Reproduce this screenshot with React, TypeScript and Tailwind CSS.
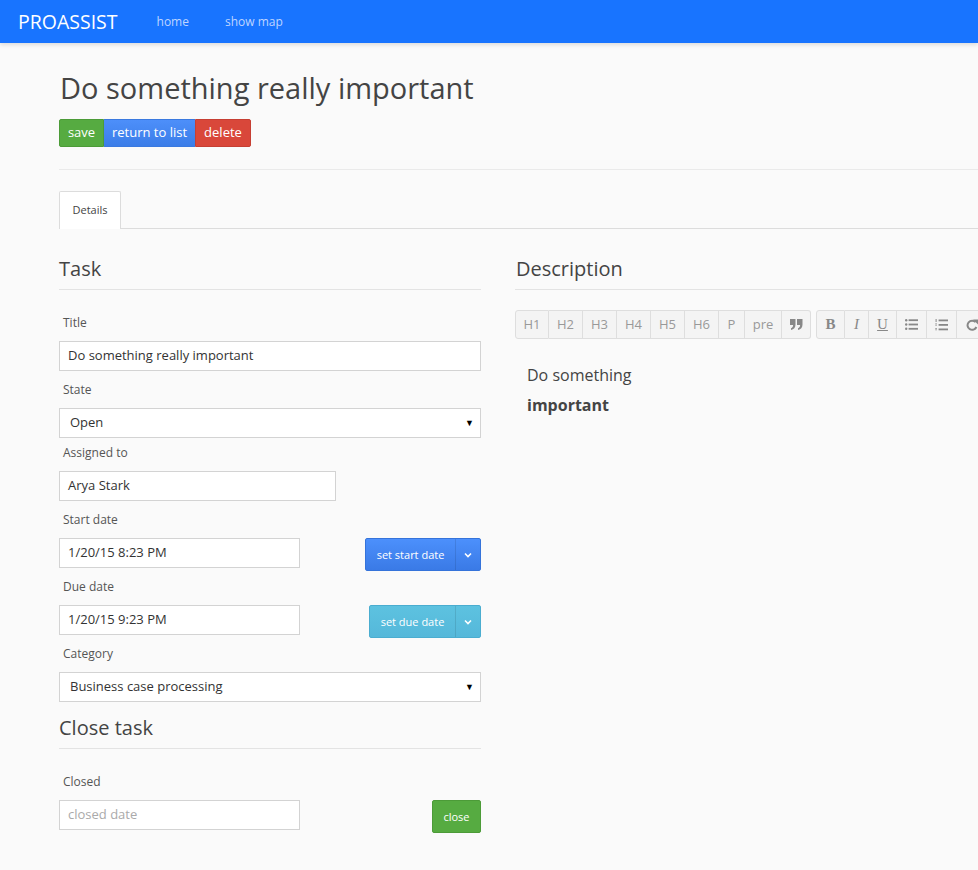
import React from "react";

const font = "font-['Open_Sans','Liberation_Sans',sans-serif]";

function Label({ children, className = "" }: { children: React.ReactNode; className?: string }) {
  return (
    <div className={`h-[17px] text-[12px] leading-[17px] text-[#555] pl-[4px] mb-[10px] ${className}`}>
      {children}
    </div>
  );
}

function TextInput({ value, placeholder, width }: { value?: string; placeholder?: string; width: string }) {
  return (
    <div
      className={`${width} h-[30px] bg-white border border-[#d3d3d3] flex items-center px-[8px] text-[13px] ${
        value ? "text-[#333]" : "text-[#aaa]"
      }`}
    >
      {value ?? placeholder}
    </div>
  );
}

function Select({ value }: { value: string }) {
  return (
    <div className="w-full h-[30px] bg-white border border-[#d3d3d3] flex items-center justify-between pl-[10px] pr-[6px] text-[13px] text-[#333]">
      <span>{value}</span>
      <span className="text-[9px] text-black">▼</span>
    </div>
  );
}

function Chevron() {
  return (
    <svg width="8" height="6" viewBox="0 0 8 6">
      <path d="M1 1.5 L4 4.5 L7 1.5" stroke="white" strokeWidth="1.6" fill="none" />
    </svg>
  );
}

function SplitButton({ label, mainW, tone }: { label: string; mainW: string; tone: "blue" | "cyan" }) {
  const bg =
    tone === "blue"
      ? "bg-gradient-to-b from-[#4c90fc] to-[#3a7ae6] border-[#3573da]"
      : "bg-gradient-to-b from-[#5dc2e0] to-[#55b8da] border-[#4aadd0]";
  return (
    <div className={`flex h-[33px] rounded-[2px] border ${bg} text-white text-[11px]`}>
      <div className={`${mainW} flex items-center justify-center pt-[2px]`}>{label}</div>
      <div className="w-[25px] flex items-center justify-center border-l border-black/10">
        <Chevron />
      </div>
    </div>
  );
}

function ToolBtn({ w, children, first, last }: { w: string; children: React.ReactNode; first?: boolean; last?: boolean }) {
  return (
    <div
      className={`${w} h-[29px] flex items-center justify-center bg-[#f4f4f4] border-y border-r border-[#dedede] text-[13px] text-[#999] ${
        first ? "border-l rounded-l-[3px]" : ""
      } ${last ? "rounded-r-[3px]" : ""}`}
    >
      {children}
    </div>
  );
}

function QuoteIcon() {
  return (
    <svg width="13" height="11" viewBox="0 0 13 11" fill="#888">
      <path d="M0 0h5.5v5.5c0 3-1.6 5-4.5 5.5v-1.8c1.4-.4 2.1-1.4 2.1-3.2H0z" />
      <path d="M7 0h5.5v5.5c0 3-1.6 5-4.5 5.5v-1.8c1.4-.4 2.1-1.4 2.1-3.2H7z" />
    </svg>
  );
}

function ListUl() {
  return (
    <svg width="13" height="11" viewBox="0 0 13 11" fill="#888">
      <rect x="0" y="0" width="2.4" height="2.4" rx="1.2" />
      <rect x="0" y="4.3" width="2.4" height="2.4" rx="1.2" />
      <rect x="0" y="8.6" width="2.4" height="2.4" rx="1.2" />
      <rect x="3.6" y="0.3" width="9.4" height="1.8" />
      <rect x="3.6" y="4.6" width="9.4" height="1.8" />
      <rect x="3.6" y="8.9" width="9.4" height="1.8" />
    </svg>
  );
}

function ListOl() {
  return (
    <svg width="13" height="12" viewBox="0 0 13 12" fill="#888">
      <rect x="0.6" y="0" width="1" height="3" />
      <rect x="0.2" y="4.5" width="1.8" height="0.7" />
      <rect x="0.2" y="5.8" width="1.8" height="0.7" />
      <rect x="0.2" y="9" width="1.8" height="0.7" />
      <rect x="0.2" y="10.5" width="1.8" height="0.7" />
      <rect x="3.6" y="0.5" width="9.4" height="1.8" />
      <rect x="3.6" y="5" width="9.4" height="1.8" />
      <rect x="3.6" y="9.5" width="9.4" height="1.8" />
    </svg>
  );
}

function RedoIcon() {
  return (
    <svg width="12" height="12" viewBox="0 0 12 12">
      <path d="M9.6 3.2A4.6 4.6 0 1 0 10.4 8" stroke="#888" strokeWidth="2" fill="none" />
      <path d="M7 0.5 L12 0.5 L12 5.5 Z" fill="#888" />
    </svg>
  );
}

export default function App() {
  return (
    <div className={`w-[978px] h-[870px] overflow-hidden bg-[#fafafa] ${font}`}>
      {/* navbar */}
      <nav className="h-[43px] bg-[#1874ff] flex items-center shadow-[0_2px_4px_rgba(0,0,0,0.12)] relative">
        <span className="ml-[18px] text-[19.5px] text-white">PROASSIST</span>
        <span className="ml-[39px] text-[12px] text-[#bfd5ff]">home</span>
        <span className="ml-[36px] text-[12px] text-[#bfd5ff]">show map</span>
      </nav>

      <div className="w-[1100px] pl-[59px]">
        <h1 className="mt-[27px] ml-[1px] text-[29px] leading-[36px] text-[#444]">Do something really important</h1>

        <div className="mt-[13px] flex h-[28px] text-[13px] text-white">
          <div className="w-[45px] flex items-center justify-center bg-[#56ab41] border border-[#4c9b38] rounded-l-[2px]">save</div>
          <div className="w-[91px] flex items-center justify-center bg-gradient-to-b from-[#4d8ffa] to-[#3b7de8] border-y border-[#3a79df]">
            return to list
          </div>
          <div className="w-[56px] flex items-center justify-center bg-[#d9473a] border border-[#c63f33] rounded-r-[2px]">delete</div>
        </div>

        <div className="mt-[22px] h-px bg-[#eaeaea]" />

        {/* tabs */}
        <div className="mt-[21px] flex border-b border-[#dcdcdc]">
          <div className="w-[62px] h-[38px] -mb-px bg-white border border-b-0 border-[#dcdcdc] rounded-t-[2px] flex items-center justify-center text-[11px] text-[#444]">
            Details
          </div>
        </div>

        <div className="mt-[28px] flex gap-[34px]">
          {/* left column */}
          <div className="w-[422px] shrink-0">
            <h2 className="text-[20px] leading-[24px] text-[#444]">Task</h2>
            <div className="mt-[8px] h-px bg-[#e3e3e3]" />

            <div className="mt-[24px]">
              <Label>Title</Label>
              <TextInput value="Do something really important" width="w-full" />
            </div>
            <div className="mt-[10px]">
              <Label>State</Label>
              <Select value="Open" />
            </div>
            <div className="mt-[6px]">
              <Label>Assigned to</Label>
              <TextInput value="Arya Stark" width="w-[277px]" />
            </div>
            <div className="mt-[10px]">
              <Label>Start date</Label>
              <div className="flex items-start justify-between">
                <TextInput value="1/20/15 8:23 PM" width="w-[241px]" />
                <SplitButton label="set start date" mainW="w-[89px]" tone="blue" />
              </div>
            </div>
            <div className="mt-[7px]">
              <Label>Due date</Label>
              <div className="flex items-start justify-between">
                <TextInput value="1/20/15 9:23 PM" width="w-[241px]" />
                <SplitButton label="set due date" mainW="w-[85px]" tone="cyan" />
              </div>
            </div>
            <div className="mt-[7px]">
              <Label>Category</Label>
              <Select value="Business case processing" />
            </div>

            <h2 className="mt-[14px] text-[20px] leading-[24px] text-[#444]">Close task</h2>
            <div className="mt-[8px] h-px bg-[#e3e3e3]" />

            <div className="mt-[24px]">
              <Label>Closed</Label>
              <div className="flex items-start justify-between">
                <TextInput placeholder="closed date" width="w-[241px]" />
                <div className="w-[49px] h-[33px] flex items-center justify-center pt-[2px] bg-[#56ab41] border border-[#4c9b38] rounded-[2px] text-white text-[11px]">
                  close
                </div>
              </div>
            </div>
          </div>

          {/* right column */}
          <div className="flex-1">
            <h2 className="ml-[1px] text-[20px] leading-[24px] text-[#444]">Description</h2>
            <div className="mt-[8px] h-px bg-[#e3e3e3]" />

            <div className="mt-[20px] flex gap-[5px] whitespace-nowrap">
              <div className="flex">
                <ToolBtn w="w-[34px]" first>H1</ToolBtn>
                <ToolBtn w="w-[34px]">H2</ToolBtn>
                <ToolBtn w="w-[34px]">H3</ToolBtn>
                <ToolBtn w="w-[34px]">H4</ToolBtn>
                <ToolBtn w="w-[34px]">H5</ToolBtn>
                <ToolBtn w="w-[34px]">H6</ToolBtn>
                <ToolBtn w="w-[26px]">P</ToolBtn>
                <ToolBtn w="w-[37px]">pre</ToolBtn>
                <ToolBtn w="w-[29px]" last>
                  <QuoteIcon />
                </ToolBtn>
              </div>
              <div className="flex">
                <ToolBtn w="w-[29px]" first>
                  <span className="font-['Liberation_Serif',serif] font-bold text-[15px] text-[#888]">B</span>
                </ToolBtn>
                <ToolBtn w="w-[24px]">
                  <span className="font-['Liberation_Serif',serif] italic text-[15px] text-[#888]">I</span>
                </ToolBtn>
                <ToolBtn w="w-[28px]">
                  <span className="font-['Liberation_Serif',serif] underline text-[15px] text-[#888]">U</span>
                </ToolBtn>
                <ToolBtn w="w-[30px]">
                  <ListUl />
                </ToolBtn>
                <ToolBtn w="w-[30px]">
                  <ListOl />
                </ToolBtn>
                <ToolBtn w="w-[30px]">
                  <RedoIcon />
                </ToolBtn>
                <ToolBtn w="w-[30px]" last>
                  <span />
                </ToolBtn>
              </div>
            </div>

            <div className="mt-[21px] pl-[12px] text-[16px] leading-[30px] text-[#444]">
              <p>Do something</p>
              <p className="font-bold">important</p>
            </div>
          </div>
        </div>
      </div>
    </div>
  );
}
